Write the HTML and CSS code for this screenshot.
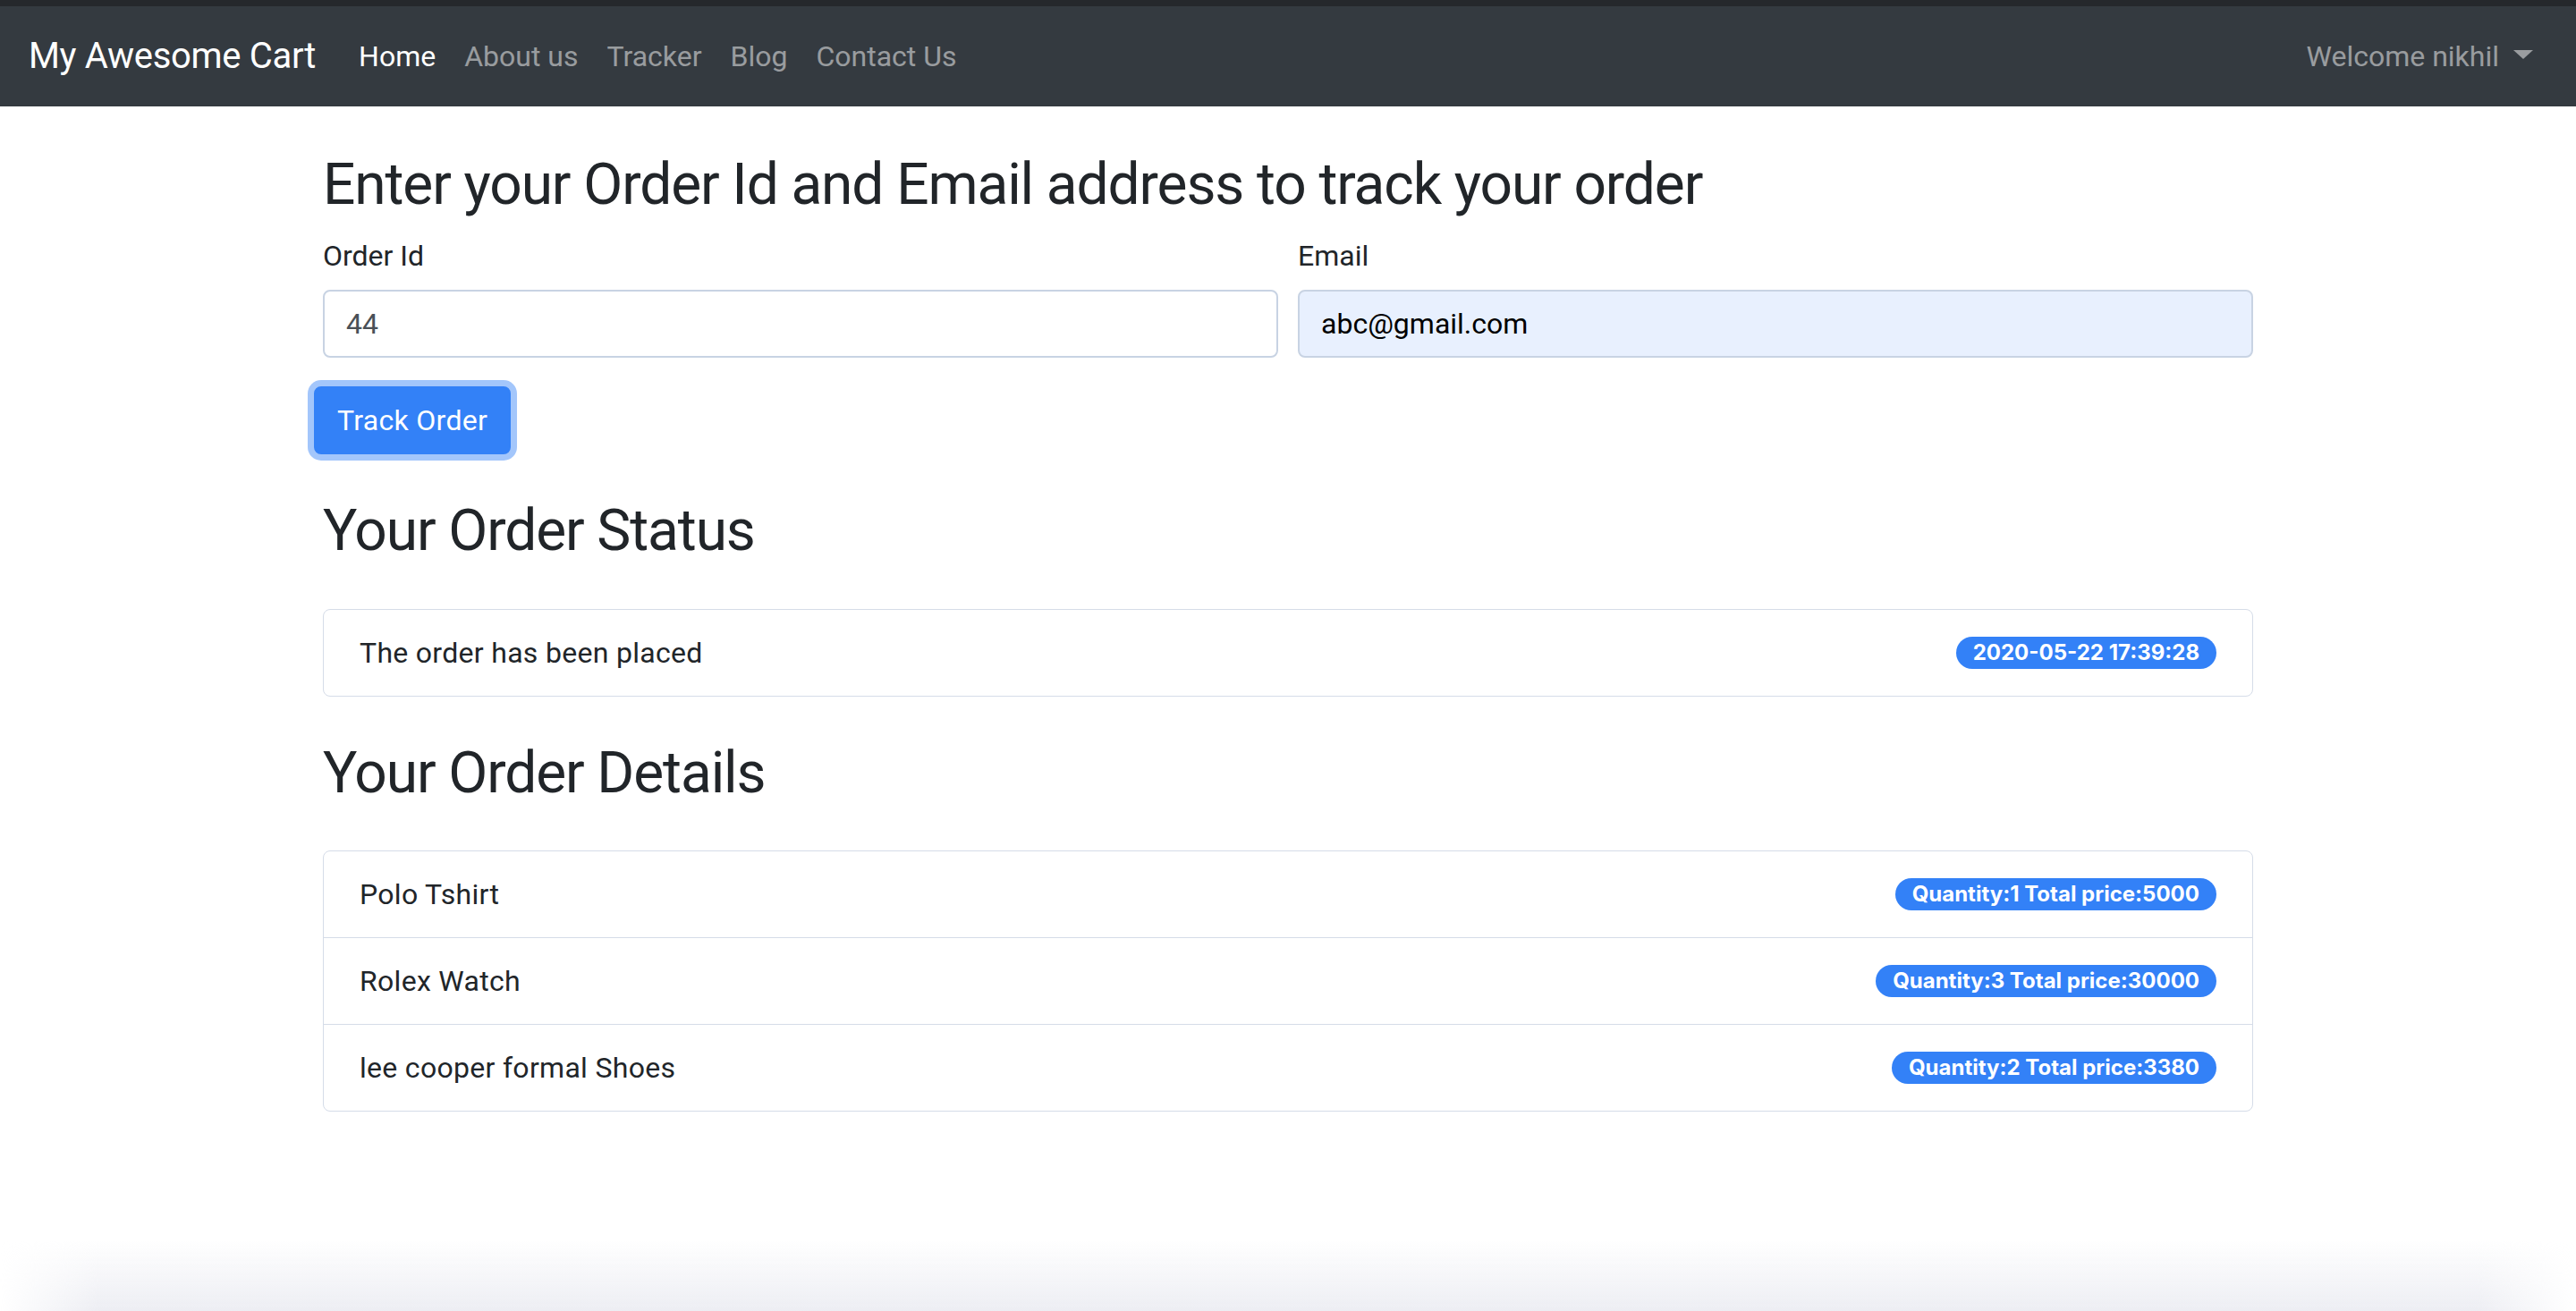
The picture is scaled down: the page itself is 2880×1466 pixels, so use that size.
FILE: index.html
```html
<!DOCTYPE html>
<html lang="en">
<head>
<meta charset="utf-8">
<title>Tracker - My Awesome Cart</title>
<link rel="stylesheet" href="styles.css">
</head>
<body>
<div class="topband"></div>
<nav class="navbar">
  <a class="brand" href="#">My Awesome Cart</a>
  <ul class="nav">
    <li><a class="nav-link active" href="#">Home</a></li>
    <li><a class="nav-link" href="#">About us</a></li>
    <li><a class="nav-link" href="#">Tracker</a></li>
    <li><a class="nav-link" href="#">Blog</a></li>
    <li><a class="nav-link" href="#">Contact Us</a></li>
  </ul>
  <a class="nav-link welcome" href="#">Welcome nikhil<span class="caret"></span></a>
</nav>

<main class="page">
  <section class="track">
    <h2 class="title">Enter your Order Id and Email address to track your order</h2>
    <form class="track-form">
      <div class="form-row">
        <div class="form-group">
          <label class="label" for="orderId">Order Id</label>
          <input class="input" id="orderId" type="text" value="44">
        </div>
        <div class="form-group">
          <label class="label" for="email">Email</label>
          <input class="input input-filled" id="email" type="email" value="abc@gmail.com">
        </div>
      </div>
      <button class="btn" type="button">Track Order</button>
    </form>
  </section>

  <section class="block">
    <h2 class="title">Your Order Status</h2>
    <ul class="list">
      <li class="item"><span>The order has been placed</span><span class="badge">2020-05-22 17:39:28</span></li>
    </ul>
  </section>

  <section class="block">
    <h2 class="title">Your Order Details</h2>
    <ul class="list">
      <li class="item"><span>Polo Tshirt</span><span class="badge">Quantity:1 Total price:5000</span></li>
      <li class="item"><span>Rolex Watch</span><span class="badge">Quantity:3 Total price:30000</span></li>
      <li class="item"><span>lee cooper formal Shoes</span><span class="badge">Quantity:2 Total price:3380</span></li>
    </ul>
  </section>
</main>
<div class="shade"></div>
</body>
</html>
```

FILE: styles.css
```css
* { box-sizing: border-box; }

html, body { height: 100%; }

body {
  margin: 0;
  font-family: Roboto, "Noto Sans", "Liberation Sans", sans-serif;
  font-size: 32px;
  line-height: 1.5;
  color: #212529;
  background: #fff;
  display: flex;
  flex-direction: column;
  min-height: 1466px;
  overflow: hidden;
}

.topband {
  height: 7px;
  background: #25282c;
  flex: none;
}

.navbar {
  flex: none;
  height: 112px;
  background: #343a40;
  padding: 16px 32px;
  display: flex;
  align-items: center;
}

.brand {
  font-size: 40px;
  line-height: 60px;
  color: #fff;
  text-decoration: none;
  margin-right: 32px;
  white-space: nowrap;
  letter-spacing: -0.3px;
}

.nav {
  list-style: none;
  margin: 0;
  padding: 0;
  display: flex;
}

.nav-link {
  display: block;
  padding: 16px 16px;
  color: rgba(255, 255, 255, 0.5);
  text-decoration: none;
  line-height: 48px;
  white-space: nowrap;
}

.nav-link.active { color: #fff; }

.welcome {
  margin-left: auto;
  display: flex;
  align-items: center;
}

.caret {
  display: inline-block;
  margin-left: 16px;
  width: 0;
  height: 0;
  border-top: 10px solid rgba(255, 255, 255, 0.5);
  border-left: 11px solid transparent;
  border-right: 11px solid transparent;
  margin-top: -4px;
}

.page {
  width: 2158px;
  margin: 0 auto;
}

.track {
  margin: 50px 0 48px;
}

.title {
  font-size: 64px;
  font-weight: 400;
  line-height: 1.2;
  margin: 0 0 16px;
  color: #212529;
  letter-spacing: -1.1px;
}

.form-row {
  display: grid;
  grid-template-columns: 1fr 1fr;
  column-gap: 22px;
}

.form-group {
  margin-bottom: 32px;
}

.label {
  display: block;
  margin-bottom: 14px;
  line-height: 48px;
}

.input {
  display: block;
  width: 100%;
  height: 76px;
  padding: 12px 24px;
  font-family: inherit;
  font-size: 32px;
  line-height: 48px;
  color: #495057;
  background: #fff;
  border: 2px solid #c8d3e3;
  border-radius: 8px;
  outline: none;
}

.input-filled {
  background: #e8f0fe;
  color: #000;
}

.btn {
  display: block;
  margin-left: -10px;
  height: 76px;
  padding: 12px 24px;
  font-family: inherit;
  font-size: 32px;
  line-height: 48px;
  letter-spacing: 0.3px;
  color: #fff;
  background: #3381f7;
  border: 2px solid #3381f7;
  border-radius: 8px;
  box-shadow: 0 0 0 7px rgba(51, 129, 247, 0.45);
  cursor: pointer;
}

.block {
  margin-bottom: 48px;
}

.block .title {
  margin-bottom: 48px;
}

.list {
  list-style: none;
  margin: 0;
  padding: 0;
  border: 1px solid #d5dce8;
  border-radius: 8px;
}

.item {
  display: flex;
  justify-content: space-between;
  align-items: center;
  padding: 24px 40px;
  line-height: 48px;
  border-top: 1px solid #d5dce8;
  letter-spacing: 0.3px;
}

.item:first-child { border-top: none; }

.badge {
  display: inline-block;
  padding: 6px 19px;
  font-family: Inter, "Noto Sans", sans-serif;
  font-size: 24px;
  font-weight: 700;
  line-height: 1;
  letter-spacing: 0;
  color: #fff;
  background: #3381f7;
  border-radius: 20px;
  white-space: nowrap;
}

.shade {
  margin-top: auto;
  flex: none;
  height: 80px;
  background: linear-gradient(to bottom, rgba(235, 236, 242, 0), rgba(235, 236, 242, 0.9));
  -webkit-mask-image: linear-gradient(to right, transparent 0, #000 110px, #000 2770px, transparent 2880px);
  mask-image: linear-gradient(to right, transparent 0, #000 110px, #000 2770px, transparent 2880px);
}
```
